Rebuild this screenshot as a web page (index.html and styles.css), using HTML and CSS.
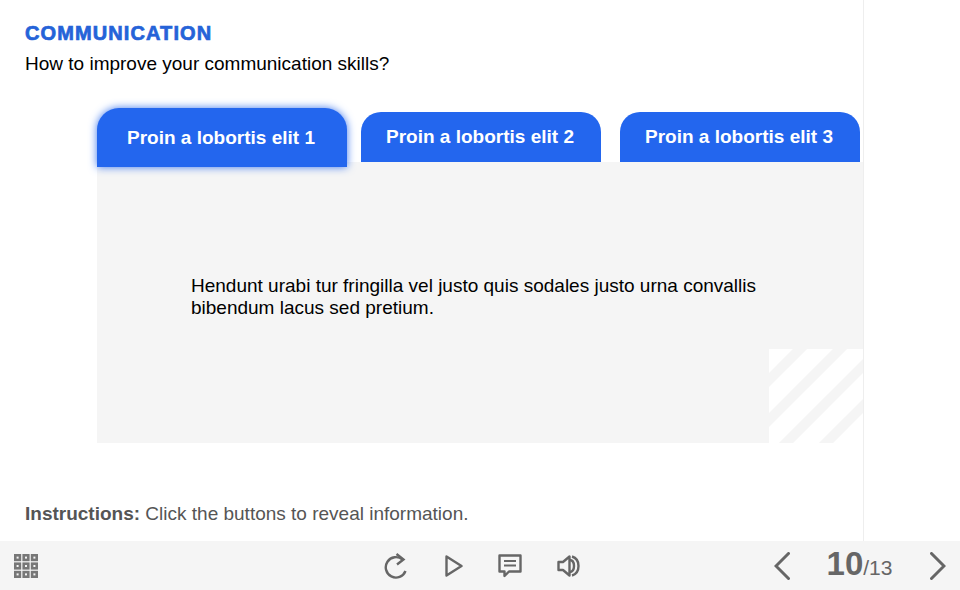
FILE: index.html
```html
<!DOCTYPE html>
<html lang="en">
<head>
    <meta charset="UTF-8">
    <meta name="viewport" content="width=device-width, initial-scale=1.0">
    <title>Communication</title>
    <link rel="stylesheet" href="styles.css">
</head>
<body>

    <div class="slide">
        <h1 class="title">COMMUNICATION</h1>
        <p class="question">How to improve your communication skills?</p>

        <div class="tabs">
            <div class="tab active-tab">Proin a lobortis elit 1</div>
            <div class="tab">Proin a lobortis elit 2</div>
            <div class="tab">Proin a lobortis elit 3</div>
        </div>

        <div class="tab-content">
            <p>Hendunt urabi tur fringilla vel justo quis sodales justo urna convallis bibendum lacus sed pretium.</p>
            <svg class="stripes" width="94" height="94" viewBox="0 0 94 94">
                <rect width="94" height="94" fill="#fff"/>
                <g stroke="#f5f5f5" stroke-width="10">
                    <path d="M-5 36 L36 -5"/>
                    <path d="M-5 76 L76 -5"/>
                    <path d="M7 104 L104 7"/>
                    <path d="M47 104 L104 47"/>
                </g>
            </svg>
        </div>

        <p class="instructions"><b>Instructions:</b> Click the buttons to reveal information.</p>
    </div>

    <div class="bar">
        <svg class="menu-icon" width="24" height="24" viewBox="0 0 24 24" fill="none" stroke="#777" stroke-width="2.6">
            <rect x="1.3" y="1.3" width="4.6" height="4.6"/><rect x="9.7" y="1.3" width="4.6" height="4.6"/><rect x="18.1" y="1.3" width="4.6" height="4.6"/>
            <rect x="1.3" y="9.7" width="4.6" height="4.6"/><rect x="9.7" y="9.7" width="4.6" height="4.6"/><rect x="18.1" y="9.7" width="4.6" height="4.6"/>
            <rect x="1.3" y="18.1" width="4.6" height="4.6"/><rect x="9.7" y="18.1" width="4.6" height="4.6"/><rect x="18.1" y="18.1" width="4.6" height="4.6"/>
        </svg>

        <div class="controls">
            <svg width="26" height="26" viewBox="0 0 26 26" fill="none" stroke="#666" stroke-width="2.4">
                <path d="M18.5 6.5 A10.2 10.2 0 1 0 21.5 18"/>
                <path d="M12.5 1 L19.5 6.5 L13 11.5"/>
            </svg>
            <svg width="18" height="22" viewBox="0 0 18 22" fill="none" stroke="#666" stroke-width="2.4" stroke-linejoin="round">
                <path d="M1.5 1.5 L16.5 11 L1.5 20.5 Z"/>
            </svg>
            <svg width="24" height="24" viewBox="0 0 24 24" fill="none" stroke="#666" stroke-width="2.4">
                <path d="M1.5 1.5 H22.5 V17.5 H11 L6.5 22 V17.5 H1.5 Z" stroke-linejoin="round"/>
                <path d="M6 7 H18 M6 11.5 H18" stroke-width="2"/>
            </svg>
            <svg width="23" height="24" viewBox="0 0 23 24" fill="none" stroke="#666" stroke-width="2.4" stroke-linejoin="round">
                <path d="M1.5 8 H6 L12.5 2.5 V21.5 L6 16 H1.5 Z"/>
                <path d="M12.5 6 C16 6 17 9 17 12 C17 15 16 18 12.5 18"/>
                <path d="M15 2.5 C20 4 21.5 8 21.5 12 C21.5 16 20 20 15 21.5"/>
            </svg>
        </div>

        <div class="pager">
            <svg width="16" height="28" viewBox="0 0 16 28" fill="none" stroke="#666" stroke-width="3" stroke-linecap="round">
                <path d="M14.5 1.5 L2 14 L14.5 26.5"/>
            </svg>
            <div class="page-count"><span class="page-current">10</span>/13</div>
            <svg width="16" height="28" viewBox="0 0 16 28" fill="none" stroke="#666" stroke-width="3" stroke-linecap="round">
                <path d="M1.5 1.5 L14 14 L1.5 26.5"/>
            </svg>
        </div>
    </div>

</body>
</html>
```

FILE: styles.css
```css
body {
    margin: 0;
    font-family: "Liberation Sans", Arial, sans-serif;
    background-color: #fff;
}

.slide {
    box-sizing: border-box;
    width: 864px;
    height: 541px;
    padding-top: 22px;
    border-right: 1px solid #eee;
}

.title {
    margin: 0 0 0 25px;
    font-size: 20px;
    line-height: 22px;
    color: #2563d8;
    letter-spacing: 1.1px;
    -webkit-text-stroke: 0.7px #2563d8;
}

.question {
    margin: 9px 0 0 25px;
    font-size: 19px;
    line-height: 22px;
    color: #000;
}

.tabs {
    display: flex;
    align-items: flex-end;
    gap: 19px;
    margin: 33px 0 0 96.5px;
    height: 54px;
}

.tab {
    box-sizing: border-box;
    width: 240px;
    height: 50px;
    padding-right: 1px;
    line-height: 50px;
    text-align: center;
    font-size: 19px;
    font-weight: bold;
    color: #fff;
    background-color: #2366ee;
    border-radius: 20px 20px 0 0;
}

.active-tab {
    position: relative;
    z-index: 1;
    width: 250px;
    height: 59px;
    line-height: 59px;
    margin-bottom: -5px;
    margin-right: -5px;
    border-radius: 22px 22px 0 0;
    box-shadow: 0 0 8px #3f78ee;
}

.tab-content {
    position: relative;
    box-sizing: border-box;
    height: 281px;
    margin-left: 97px;
    padding: 113px 94px 0;
    background-color: #f5f5f5;
    font-size: 19px;
    line-height: 22px;
    color: #000;
}

.tab-content p {
    margin: 0;
}

.stripes {
    position: absolute;
    right: 0;
    bottom: 0;
}

.instructions {
    margin: 60px 0 0 25px;
    font-size: 19px;
    line-height: 22px;
    color: #555;
}

.bar {
    display: flex;
    align-items: center;
    height: 49px;
    background-color: #f5f5f5;
}

.menu-icon {
    margin-left: 14px;
}

.controls {
    display: flex;
    align-items: center;
    gap: 35px;
    margin-left: 346px;
}

.pager {
    display: flex;
    align-items: center;
    margin-left: auto;
    margin-right: 14px;
    color: #666;
}

.page-count {
    box-sizing: border-box;
    width: 140px;
    padding: 1px 1px 0 0;
    text-align: center;
    font-size: 21px;
    line-height: 34px;
}

.page-current {
    font-size: 33px;
    font-weight: bold;
}
```
